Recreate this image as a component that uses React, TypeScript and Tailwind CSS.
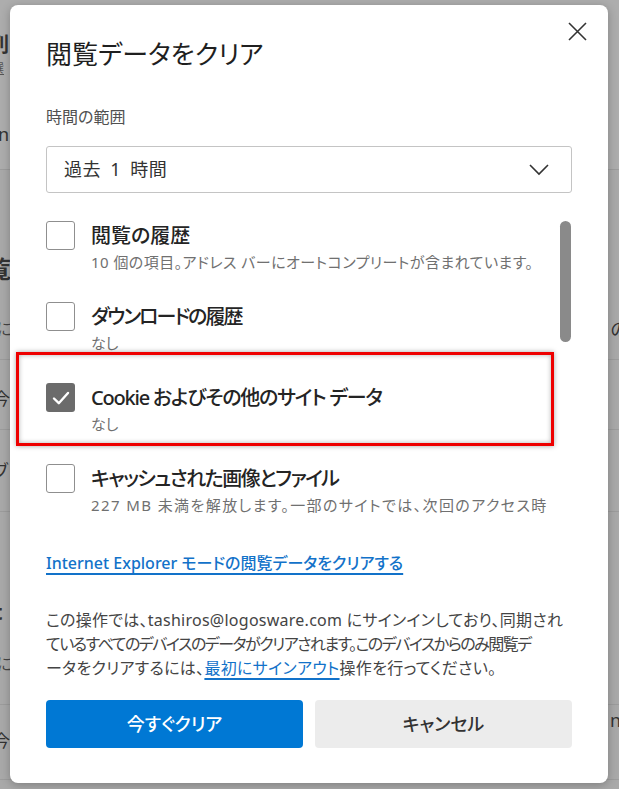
import React from "react";

const font = "font-['Noto_Sans','Noto_Sans_CJK_JP',sans-serif] [font-feature-settings:'palt']";

function Checkbox({ checked }: { checked?: boolean }) {
  if (checked) {
    return (
      <div className="w-[29px] h-[29px] shrink-0 rounded-[3px] bg-[#6b6b6b] flex items-center justify-center">
        <svg width="20" height="20" viewBox="0 0 20 20" fill="none">
          <path d="M3 10.5 L7.8 15.2 L17 5" stroke="white" strokeWidth="2.4" strokeLinecap="round" strokeLinejoin="round" />
        </svg>
      </div>
    );
  }
  return <div className="w-[29px] h-[29px] shrink-0 rounded-[3px] border border-[#8f8f8f] bg-white" />;
}

function Item({
  checked,
  label,
  labelTrack,
  sub,
}: {
  checked?: boolean;
  label: string;
  labelTrack: string;
  sub: { t: string; track: string }[];
}) {
  return (
    <div className="flex gap-[16px] mb-[29px]">
      <Checkbox checked={checked} />
      <div className="flex flex-col">
        <div className={`text-[20px] leading-[30px] font-medium text-[#242424] whitespace-nowrap ${labelTrack}`}>{label}</div>
        {sub.map((s, i) => (
          <div key={i} className={`text-[15px] leading-[22px] text-[#707070] whitespace-nowrap ${s.track}`}>
            {s.t}
          </div>
        ))}
      </div>
    </div>
  );
}

export default function App() {
  return (
    <div className={`relative w-[619px] h-[789px] overflow-hidden bg-[#a9a9a9] ${font}`}>
      {/* dimmed page underneath */}
      <div className="flex flex-col">
        <div className="flex flex-col h-[170px] border-b border-[#9c9c9c] bg-[#adadad]">
          <div className="h-[32px]" />
          <span className="-ml-[11px] text-[20px] leading-[26px] font-bold text-[#333]">列</span>
          <span className="-ml-[9px] text-[13px] leading-[20px] text-[#555] underline">選</span>
          <span className="mt-[44px] -ml-[2px] text-[18px] leading-[24px] text-[#333]">n</span>
        </div>
        <div className="flex flex-col h-[190px] border-b border-[#9c9c9c]">
          <div className="h-[83px]" />
          <span className="-ml-[13px] text-[24px] leading-[32px] font-bold text-[#333]">覧</span>
          <div className="flex justify-between mt-[32px]">
            <span className="-ml-[8px] text-[16px] leading-[24px] text-[#444]">.に</span>
            <span className="-mr-[9px] text-[18px] leading-[24px] text-[#333]">の</span>
          </div>
        </div>
        <div className="h-[70px] border-b border-[#9c9c9c] flex items-center">
          <span className="mt-[8px] -ml-[7px] text-[17px] text-[#333]">今</span>
        </div>
        <div className="h-[82px] border-b border-[#9c9c9c] flex items-center">
          <span className="-ml-[7px] text-[17px] text-[#333]">ブ</span>
        </div>
        <div className="flex flex-col h-[193px] border-b border-[#9c9c9c]">
          <div className="h-[84px]" />
          <span className="-ml-[7px] text-[22px] leading-[30px] font-bold text-[#333]">t</span>
          <span className="mt-[26px] -ml-[8px] text-[16px] leading-[24px] text-[#444]">.に</span>
        </div>
        <div className="h-[75px] border-b border-[#9c9c9c] flex justify-between">
          <span className="mt-[24px] -ml-[7px] text-[17px] leading-[24px] text-[#333]">今</span>
          <span className="mt-[3px] -mr-[2px] text-[18px] leading-[24px] text-[#333]">n</span>
        </div>
      </div>

      {/* dialog */}
      <div className="absolute left-[10px] top-[5px] w-[598px] h-[778px] bg-white rounded-[8px] shadow-[0_2px_10px_rgba(0,0,0,0.25)] px-[36px] pt-[17px] flex flex-col">
        <div className="flex items-start justify-between">
          <h1 className="mt-[14px] text-[26px] leading-[36px] font-normal text-[#1f1f1f]">閲覧データをクリア</h1>
          <button className="-mr-[15px] w-[19px] h-[19px] flex items-center justify-center">
            <svg width="19" height="19" viewBox="0 0 19 19" fill="none">
              <path d="M1 1 L18 18 M18 1 L1 18" stroke="#333" strokeWidth="1.6" />
            </svg>
          </button>
        </div>

        <div className="mt-[33px] text-[16px] leading-[24px] text-[#505050]">時間の範囲</div>

        <div className="mt-[17px] h-[47px] rounded-[3px] border border-[#c4c4c4] flex items-center justify-between pl-[17px] pr-[22px]">
          <span className="text-[18px] text-[#333] [word-spacing:4px] tracking-[0.5px]">過去 1 時間</span>
          <svg width="20" height="12" viewBox="0 0 20 12" fill="none">
            <path d="M1 1 L10 10 L19 1" stroke="#333" strokeWidth="1.6" />
          </svg>
        </div>

        <div className="h-[327px] overflow-hidden flex">
          <div className="flex-1 flex flex-col pt-[28px]">
            <Item
              label="閲覧の履歴"
              labelTrack=""
              sub={[{ t: "10 個の項目。アドレス バーにオートコンプリートが含まれています。", track: "tracking-[0.45px]" }]}
            />
            <Item label="ダウンロードの履歴" labelTrack="tracking-[-2px]" sub={[{ t: "なし", track: "" }]} />
            <Item
              checked
              label="Cookie およびその他のサイト データ"
              labelTrack="tracking-[-1.2px]"
              sub={[{ t: "なし", track: "" }]}
            />
            <Item
              label="キャッシュされた画像とファイル"
              labelTrack="tracking-[-1.5px]"
              sub={[
                { t: "227 MB 未満を解放します。一部のサイトでは、次回のアクセス時", track: "tracking-[1.4px]" },
                { t: "に読み込みに時間がかかる場合があります。", track: "tracking-[1.4px]" },
              ]}
            />
          </div>
          <div className="w-[12px] pt-[28px]">
            <div className="w-[11px] h-[121px] rounded-full bg-[#8a8a8a]" />
          </div>
        </div>

        <div className="mt-[31px]">
          <a className="text-[16px] leading-[24px] font-medium text-[#1272c9] underline decoration-[1.5px] underline-offset-[4px]">
            Internet Explorer モードの閲覧データをクリアする
          </a>
        </div>

        <div className="mt-[33px] text-[16px] leading-[24px] text-[#444] flex flex-col">
          <span className="whitespace-nowrap tracking-[0.25px]">この操作では、tashiros@logosware.com にサインインしており、同期され</span>
          <span className="whitespace-nowrap tracking-[-1.5px]">ているすべてのデバイスのデータがクリアされます。このデバイスからのみ閲覧デ</span>
          <span className="whitespace-nowrap tracking-[0.3px]">
            ータをクリアするには、
            <a className="text-[#1272c9] underline decoration-[1.5px] underline-offset-[4px]">最初にサインアウト</a>
            操作を行ってください。
          </span>
        </div>

        <div className="mt-[20px] grid grid-cols-2 gap-[12px]">
          <button className="h-[48px] rounded-[4px] bg-[#0078d4] text-white text-[18px] font-medium">今すぐクリア</button>
          <button className="h-[48px] rounded-[4px] bg-[#ececec] text-[#333] text-[18px] font-medium">キャンセル</button>
        </div>
      </div>

      {/* annotation highlight */}
      <div className="absolute left-[16px] top-[352px] w-[538px] h-[94px] border-[3px] border-[#ee0000] shadow-[0_0_5px_rgba(0,0,0,0.35),inset_0_0_5px_rgba(0,0,0,0.3)]" />
    </div>
  );
}
